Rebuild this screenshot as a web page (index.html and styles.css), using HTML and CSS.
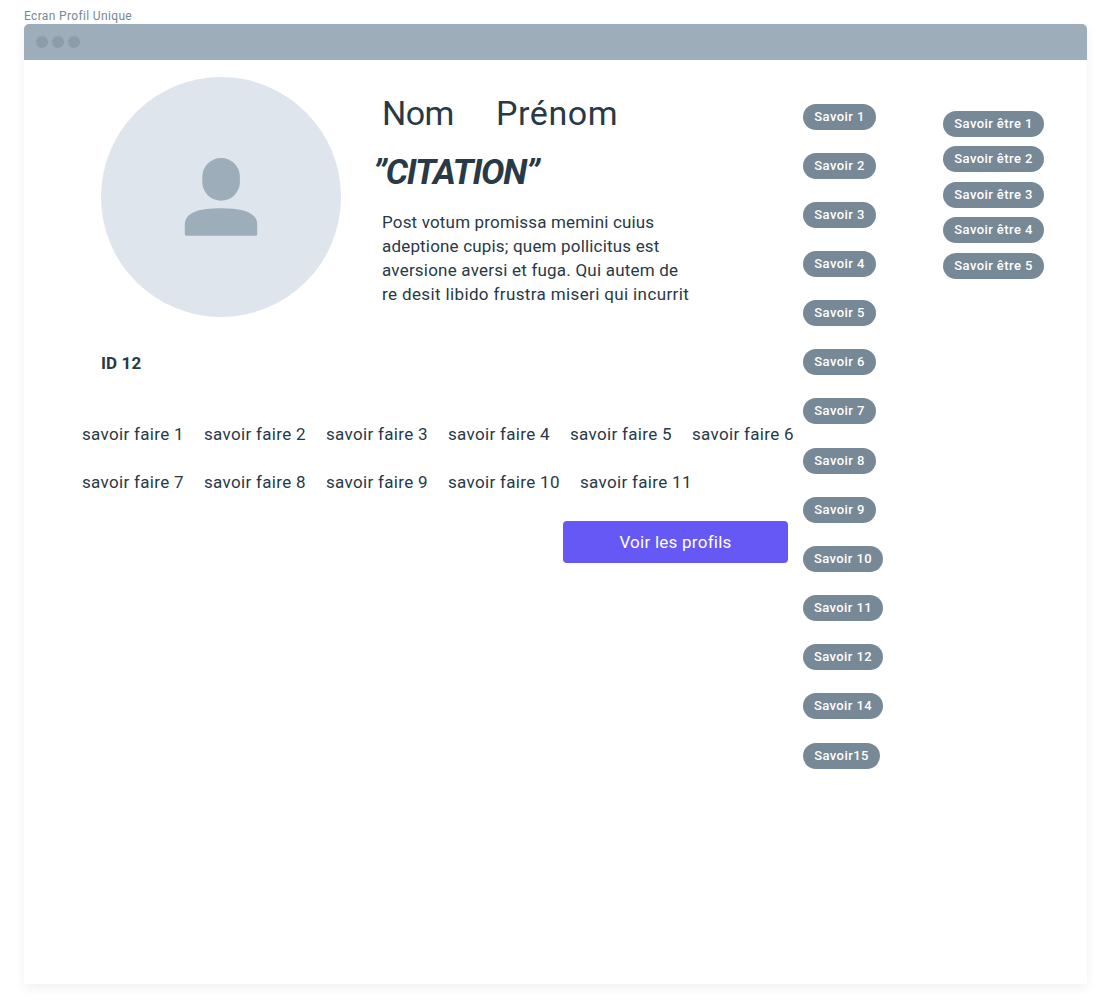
FILE: index.html
```html
<!DOCTYPE html>
<html lang="fr">
<head>
<meta charset="utf-8">
<title>Ecran Profil Unique</title>
<link rel="stylesheet" href="styles.css">
</head>
<body>
<div class="label">Ecran Profil Unique</div>
<div class="window">
  <div class="titlebar"><i class="dot"></i><i class="dot"></i><i class="dot"></i></div>
  <div class="content">
    <main class="main">
      <section class="profile">
        <div class="avatar">
          <svg width="74" height="80" viewBox="0 0 74 80" fill="#9dadb9">
            <rect x="18.3" y="1" width="37.6" height="42.7" rx="18.8"/>
            <path d="M.8 67.5C.8 55 16 51.2 37 51.2S73.2 55 73.2 67.5V77.3Q73.2 78.7 71.8 78.7H2.2Q.8 78.7 .8 77.3Z"/>
          </svg>
        </div>
        <div class="bio">
          <h1 class="name"><span class="last">Nom</span><span class="first">Prénom</span></h1>
          <div class="quote">”CITATION”</div>
          <p class="text">
            <span class="line l1">Post votum promissa memini cuius</span>
            <span class="line l2">adeptione cupis; quem pollicitus est</span>
            <span class="line l3">aversione aversi et fuga. Qui autem de</span>
            <span class="line l4">re desit libido frustra miseri qui incurrit</span>
          </p>
        </div>
      </section>
      <div class="id">ID 12</div>
      <ul class="skills">
        <li>savoir faire 1</li><li>savoir faire 2</li><li>savoir faire 3</li><li>savoir faire 4</li><li>savoir faire 5</li><li>savoir faire 6</li>
      </ul>
      <ul class="skills">
        <li>savoir faire 7</li><li>savoir faire 8</li><li>savoir faire 9</li><li class="wide">savoir faire 10</li><li class="wide">savoir faire 11</li>
      </ul>
      <button class="button">Voir les profils</button>
    </main>
    <div class="tags knowledge">
      <span class="tag">Savoir 1</span><span class="tag">Savoir 2</span><span class="tag">Savoir 3</span><span class="tag">Savoir 4</span><span class="tag">Savoir 5</span><span class="tag">Savoir 6</span><span class="tag">Savoir 7</span><span class="tag">Savoir 8</span><span class="tag">Savoir 9</span><span class="tag two">Savoir 10</span><span class="tag two">Savoir 11</span><span class="tag two">Savoir 12</span><span class="tag two">Savoir 14</span><span class="tag joined">Savoir15</span>
    </div>
    <div class="tags attitude">
      <span class="tag">Savoir être 1</span><span class="tag">Savoir être 2</span><span class="tag">Savoir être 3</span><span class="tag">Savoir être 4</span><span class="tag">Savoir être 5</span>
    </div>
  </div>
</div>
</body>
</html>
```
FILE: styles.css
```css
* { box-sizing: border-box; }
body { margin: 0; padding: 8px 23px 24px 24px; background: #fff; color: #283947; font: 17px/24px Roboto, "Liberation Sans", sans-serif; }
.label { height: 16px; font-size: 12px; line-height: 16px; letter-spacing: .35px; color: #778896; }
.window { height: 960px; border-radius: 5px 5px 0 0; background: #fff; box-shadow: 0 4px 12px rgba(0,0,0,.06); }
.titlebar { display: flex; align-items: center; gap: 4px; height: 36px; padding-left: 12px; border-radius: 5px 5px 0 0; background: #9dadb9; }
.dot { width: 12px; height: 12px; border-radius: 50%; background: #8d9dab; }
.content { display: grid; grid-template-columns: 779px 140px 1fr; }
.main { padding: 17px 0 0 58px; }
.profile { display: flex; height: 240px; padding-left: 19px; }
.avatar { display: flex; justify-content: center; align-items: center; width: 240px; height: 240px; border-radius: 50%; background: #dfe5ed; }
.bio { padding: 12px 0 0 41px; white-space: nowrap; }
.name { display: flex; margin: 0; font-size: 34px; font-weight: 400; line-height: 48px; }
.last { width: 114px; letter-spacing: -.6px; }
.first { letter-spacing: .6px; }
.quote { margin: 12px 0 0 -9px; font-size: 35px; font-style: italic; font-weight: 700; line-height: 48px; letter-spacing: -1.2px; }
.text { margin: 13px 0 0; }
.line { display: block; }
.l1 { letter-spacing: .17px; }
.l2 { letter-spacing: .18px; }
.l3 { letter-spacing: .21px; }
.l4 { letter-spacing: .37px; }
.id { margin: 34px 0 47px 19px; font-weight: 700; letter-spacing: .1px; }
.skills { display: flex; gap: 20px; margin: 0 0 24px; padding: 0; list-style: none; white-space: nowrap; letter-spacing: .32px; }
.skills li { width: 102px; }
.skills .wide { width: 112px; }
.button { display: block; width: 225px; height: 42px; margin: 27px 0 0 481px; padding: 0; border: 0; border-radius: 4px; background: #6558f5; color: #fff; font: inherit; letter-spacing: .25px; }
.tags { display: flex; flex-direction: column; align-items: flex-start; }
.knowledge { gap: 23.157px; padding-top: 43.5px; }
.attitude { gap: 9.45px; padding-top: 51px; }
.tag { width: 73px; height: 26px; border-radius: 13px; background: #778896; color: #fff; font-size: 13px; font-weight: 500; line-height: 26px; letter-spacing: .42px; text-align: center; white-space: nowrap; }
.two { width: 80px; }
.joined { width: 77px; }
.attitude .tag { width: 101px; }
```
